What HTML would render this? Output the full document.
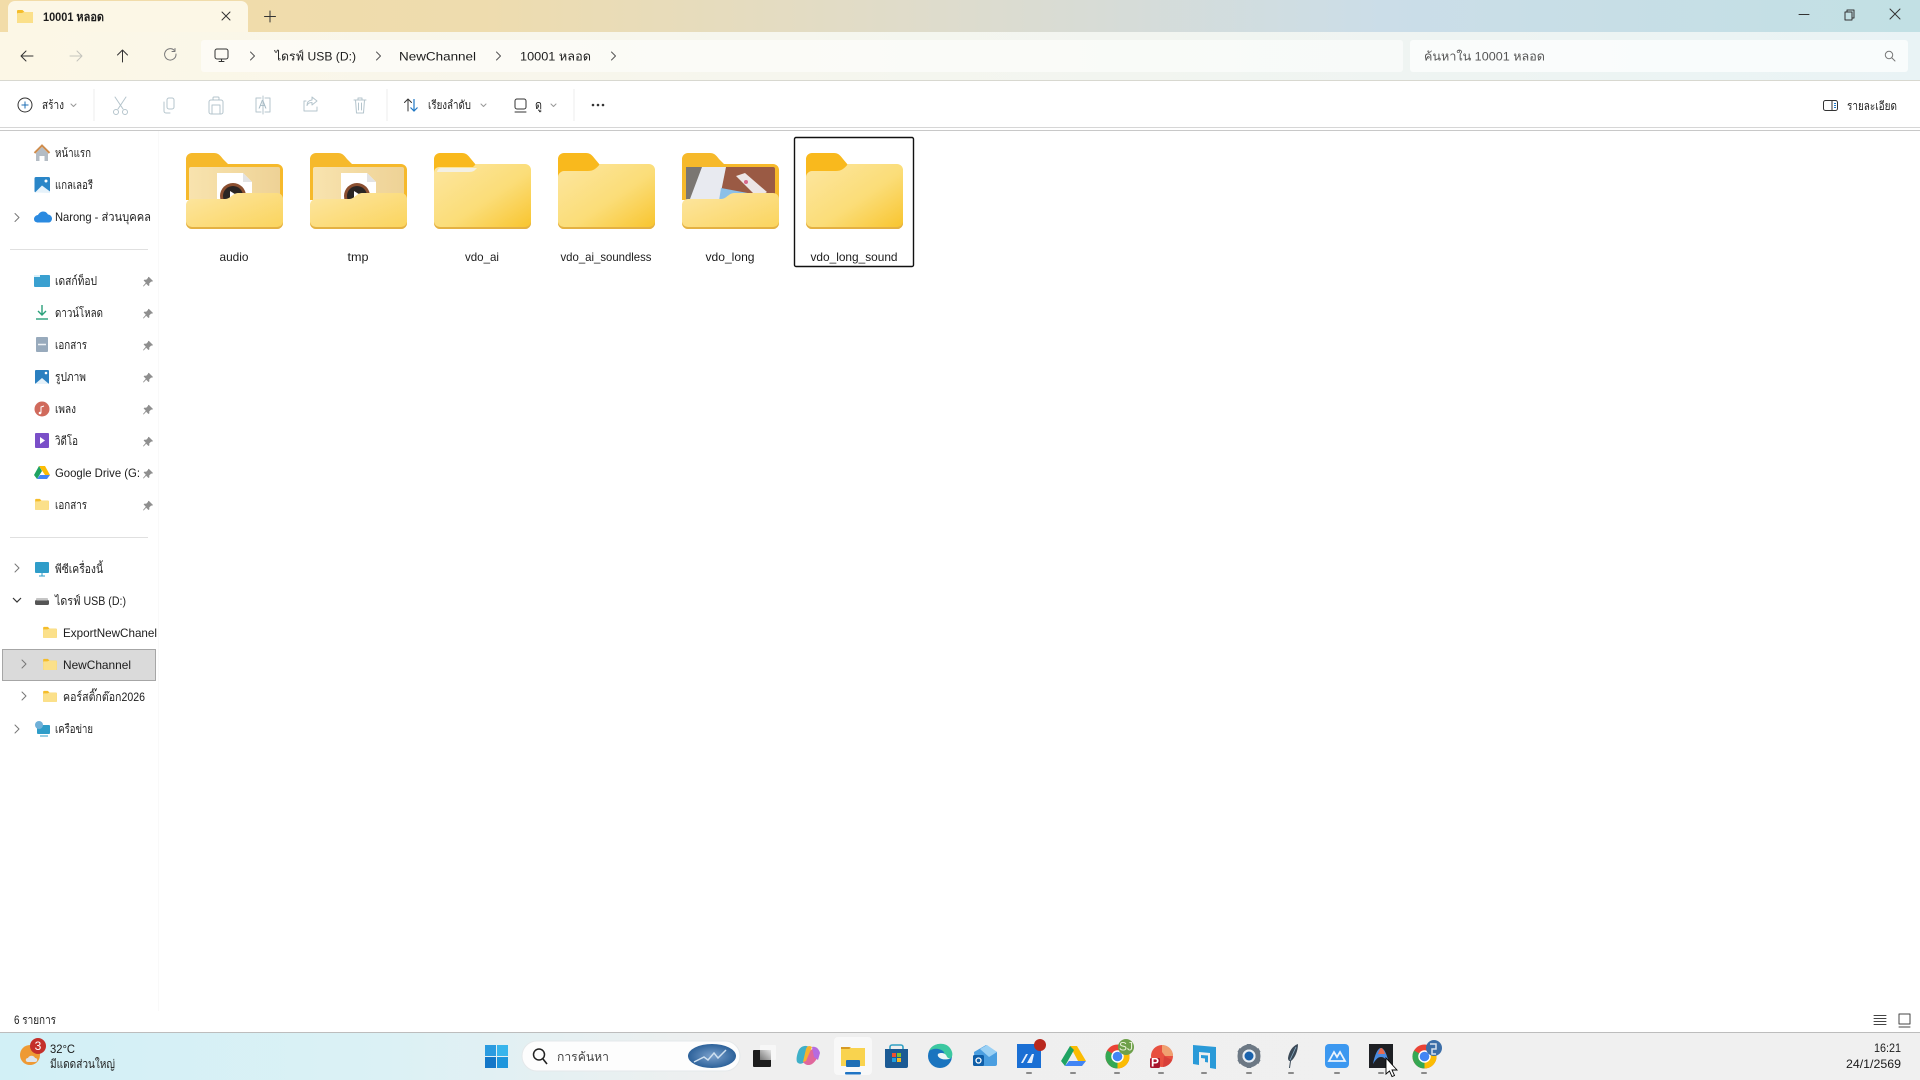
<!DOCTYPE html>
<html lang="th"><head><meta charset="utf-8"><title>10001 หลอด</title>
<style>
html,body{margin:0;padding:0;background:#fff;width:1920px;height:1080px;overflow:hidden}
svg{display:block;filter:blur(.35px)}
text{font-family:"Liberation Sans","Noto Sans CJK SC","WenQuanYi Zen Hei",sans-serif;fill:#1c1c1c;font-size:12px}
.s{fill:none;stroke:#333;stroke-width:1;stroke-linecap:round;stroke-linejoin:round}
.d{fill:none;stroke:#b4c4cc;stroke-width:1;stroke-linecap:round;stroke-linejoin:round}
.c{fill:none;stroke:#777;stroke-width:1;stroke-linecap:round;stroke-linejoin:round}
.pin{fill:#8f8f8f}
.dot{fill:#8a8a8a}
</style></head><body>
<svg width="1920" height="1080" viewBox="0 0 1920 1080" xmlns="http://www.w3.org/2000/svg">
<defs>
<linearGradient id="tb" x1="0" x2="1" y1="0" y2="0"><stop offset="0" stop-color="#f2dca8"/><stop offset=".25" stop-color="#eedcae"/><stop offset=".48" stop-color="#dfdccb"/><stop offset=".72" stop-color="#cbdde8"/><stop offset="1" stop-color="#c2e0e4"/></linearGradient>
<linearGradient id="ad" x1="0" x2="1" y1="0" y2="0"><stop offset="0" stop-color="#fcf7e6"/><stop offset=".4" stop-color="#f6f6ee"/><stop offset="1" stop-color="#e9f3f5"/></linearGradient>
<linearGradient id="tk" x1="0" x2="1" y1="0" y2="0"><stop offset="0" stop-color="#d2f0f6"/><stop offset=".2" stop-color="#dbf1f5"/><stop offset=".38" stop-color="#efefef"/><stop offset="1" stop-color="#f0f0f0"/></linearGradient>
<linearGradient id="fb" x1="0" y1="0" x2="1" y2="1"><stop offset="0" stop-color="#fce6a0"/><stop offset=".55" stop-color="#fbdd78"/><stop offset="1" stop-color="#f8c42c"/></linearGradient>
<linearGradient id="ff" x1="0" y1="0" x2="1" y2="1"><stop offset="0" stop-color="#fce6a2"/><stop offset="1" stop-color="#fbd45c"/></linearGradient>
<linearGradient id="pp" x1="0" x2="1" y1="0" y2="0"><stop offset="0" stop-color="#f8e3ae"/><stop offset="1" stop-color="#eed296"/></linearGradient>
<linearGradient id="term" x1="0" y1="1" x2="1" y2="0"><stop offset="0" stop-color="#777"/><stop offset="1" stop-color="#e6e6e6"/></linearGradient>
<radialGradient id="sdeco" cx=".5" cy=".5" r=".6"><stop offset="0" stop-color="#7aa0cc"/><stop offset="1" stop-color="#1d5590"/></radialGradient>
<symbol id="fclosed" viewBox="0 0 97 76" overflow="visible">
<path d="M0 6a6 6 0 0 1 6-6h22c4 0 6 2 9 6l5 6h49a6 6 0 0 1 6 6v52a6 6 0 0 1-6 6H6a6 6 0 0 1-6-6z" fill="#f9b91d"/>
<path d="M0 24c0-3 3-6 6-6h24c5 0 8-2 12-7h49a6 6 0 0 1 6 6v53a6 6 0 0 1-6 6H6a6 6 0 0 1-6-6z" fill="url(#fb)"/>
<path d="M0 70a6 6 0 0 0 6 6h85a6 6 0 0 0 6-6v-1a6 6 0 0 1-6 5H6a6 6 0 0 1-6-5z" fill="#e4b143"/>
</symbol>
<symbol id="fplain" viewBox="0 0 97 76" overflow="visible">
<path d="M0 6a6 6 0 0 1 6-6h22c4 0 6 2 9 6l5 6v10H0z" fill="#f9b91d"/>
<path d="M0 20q0-6 6-6h33l3-3h49a6 6 0 0 1 6 6v53a6 6 0 0 1-6 6H6a6 6 0 0 1-6-6z" fill="url(#fb)"/>
<path d="M0 70a6 6 0 0 0 6 6h85a6 6 0 0 0 6-6v-1a6 6 0 0 1-6 5H6a6 6 0 0 1-6-5z" fill="#e4b143"/>
</symbol>
<symbol id="fopen" viewBox="0 0 97 76" overflow="visible">
<path d="M0 6a6 6 0 0 1 6-6h22c4 0 6 2 9 6l5 5h49a6 6 0 0 1 6 6v30H0z" fill="#f6b92b"/>
</symbol>
<symbol id="ffront" viewBox="0 0 97 76" overflow="visible">
<path d="M0 52a6 6 0 0 1 6-6h33c4 0 6-3 8-4 1-1 3-2 6-2h38a6 6 0 0 1 6 6v24a6 6 0 0 1-6 6H6a6 6 0 0 1-6-6z" fill="url(#ff)"/>
<path d="M0 70a6 6 0 0 0 6 6h85a6 6 0 0 0 6-6v-1a6 6 0 0 1-6 5H6a6 6 0 0 1-6-5z" fill="#e4b143"/>
</symbol>
<symbol id="fsm" viewBox="0 0 16 14" overflow="visible">
<path d="M0 2a1 1 0 0 1 1-1h4.500l2 2H15a1 1 0 0 1 1 1v9a1 1 0 0 1-1 1H1a1 1 0 0 1-1-1z" fill="#f5bd2a"/>
<path d="M0 5q0-1 1-1h4l2-1h8a1 1 0 0 1 1 1v9a1 1 0 0 1-1 1H1a1 1 0 0 1-1-1z" fill="#fbe08a"/>
</symbol>
<symbol id="pinI" viewBox="0 0 10 10" overflow="visible"><path class="pin" d="M6 0l4 4-1 .8-.8-.3-2 2 .2 1.700-.9.800-2.300-2.300L.6 9.500 0 9l2.800-3.300L.6 3.400l.9-.8 1.700.2 2-2-.3-.9z"/></symbol>
<symbol id="chrome" viewBox="0 0 26 26" overflow="visible">
<circle cx="13" cy="13" r="12.500" fill="#ea4335"/>
<path d="M13 13L2.200 19.200A12.500 12.500 0 0 0 13 25.500z" fill="#34a853"/><path d="M13 13L2.200 19.200A12.500 12.500 0 0 1 2.200 6.800L13 13z" fill="#34a853"/>
<path d="M13 13V25.500A12.500 12.500 0 0 0 25.500 13H13z" fill="#fbbc04"/>
<path d="M13 13h12.500A12.500 12.500 0 0 0 23.800 6.800H13z" fill="#fbbc04"/>
<circle cx="13" cy="13" r="6.500" fill="#fff"/><circle cx="13" cy="13" r="5" fill="#4285f4"/>
</symbol>
</defs>

<rect width="1920" height="1080" fill="#fff"/>
<rect width="1920" height="32" fill="url(#tb)"/>
<rect y="32" width="1920" height="48" fill="url(#ad)"/>
<path d="M8 32V8a7 7 0 0 1 7-7h226a7 7 0 0 1 7 7v24z" fill="#fcf7e6"/>
<use href="#fsm" x="17" y="9" width="16" height="14"/>
<text x="43" y="21" font-size="12" font-weight="bold" textLength="61" lengthAdjust="spacingAndGlyphs">10001 หลอด</text>
<path class="s" d="M222 12l8 8M230 12l-8 8"/>
<path class="s" d="M270 11v11M264.500 16.500h11"/>
<path class="s" d="M1799 14.500h10"/>
<path class="s" d="M1845 12h7v8h-7zM1847 12v-2h7v8h-2"/>
<path class="s" d="M1890 9l10 10M1900 9l-10 10"/>
<rect x="201" y="40" width="1202" height="32" rx="3" fill="#ffffff" fill-opacity=".55"/>
<rect x="1410" y="40" width="498" height="32" rx="3" fill="#ffffff" fill-opacity=".7"/>
<path class="s" d="M33 56H21M26 51l-5 5 5 5"/>
<path class="d" style="stroke:#c4c4bc" d="M70 56h12M77 51l5 5-5 5"/>
<path class="s" d="M122.500 62V50M117.500 55l5-5 5 5"/>
<path class="c" d="M176 54a5.700 5.700 0 1 1-1.800-3.800M175 48.500v3h-3"/>
<rect x="215" y="49" width="13" height="10" rx="2" class="s"/><path class="s" d="M219 61.500h5M221.500 59v2"/>
<path class="c" style="stroke:#555" d="M250.500 52l4 4-4 4M376.500 52l4 4-4 4M496.500 52l4 4-4 4M611.500 52l4 4-4 4"/>
<text x="275" y="60.500" font-size="13" textLength="81" lengthAdjust="spacingAndGlyphs">ไดรฟ์ USB (D:)</text>
<text x="399" y="60.500" font-size="13" textLength="77" lengthAdjust="spacingAndGlyphs">NewChannel</text>
<text x="520" y="60.500" font-size="13" textLength="71" lengthAdjust="spacingAndGlyphs">10001 หลอด</text>
<text x="1424" y="60.500" font-size="13" style="fill:#555" textLength="121" lengthAdjust="spacingAndGlyphs">ค้นหาใน 10001 หลอด</text>
<circle cx="1889" cy="55" r="3.700" class="c"/><path class="c" d="M1892 58l3 3"/>
<rect y="80" width="1920" height="1" fill="#d8d8d0"/>
<circle cx="25" cy="105" r="7" class="s"/><path d="M25 101.500v7M21.500 105h7" stroke="#1f6fb5" fill="none"/>
<text x="42" y="109" font-size="11" textLength="22" lengthAdjust="spacingAndGlyphs">สร้าง</text>
<path class="c" style="stroke:#999" d="M71 104l2.500 2.500 2.500-2.500M481 104l2.500 2.500 2.500-2.500M551 104l2.500 2.500 2.500-2.500"/>
<path d="M94 89v32M387 89v32M574 89v32" stroke="#ececec"/>
<g class="d"><path d="M115 97l8 12M126 97l-8 12"/><circle cx="116" cy="112" r="2.500"/><circle cx="125" cy="112" r="2.500"/></g>
<g class="d"><rect x="167" y="98" width="7" height="11" rx="2"/><path d="M164 102v9a2 2 0 0 0 2 2h4"/></g>
<g class="d"><rect x="209" y="100" width="14" height="14" rx="2"/><rect x="213" y="97" width="6" height="3" rx="1"/><rect x="212" y="105" width="8" height="9"/></g>
<g class="d"><path d="M261 98h-5v14h5M265 98h5v14h-5M263 96v18"/><text x="258.500" y="108.500" font-size="9" style="fill:#a9bcc6;stroke:none">A</text></g>
<g class="d"><path d="M306 101h-2v10h13v-4M312 97l5 4-5 4v-2.500c-3 0-4 1-5 3 0-3 1-5 5-5.500z"/></g>
<g class="d"><path d="M354 100h12M358 100v-2h4v2M355.500 100l1 13h7l1-13M358.500 103v7M361.500 103v7"/></g>
<path d="M408 111V99M404.500 102.500l3.500-3.500 3.500 3.500" class="s"/><path d="M414 99v12M410.500 107.500l3.500 3.500 3.500-3.500" fill="none" stroke="#1f77c4" stroke-width="1.200"/>
<text x="428" y="109" font-size="11" textLength="43" lengthAdjust="spacingAndGlyphs">เรียงลำดับ</text>
<rect x="515" y="99" width="11" height="10" rx="2" class="s"/><path class="s" d="M515 112h11"/>
<text x="535" y="109" font-size="11" textLength="7" lengthAdjust="spacingAndGlyphs">ดู</text>
<circle cx="593" cy="105" r="1.300" fill="#333"/><circle cx="598" cy="105" r="1.300" fill="#333"/><circle cx="603" cy="105" r="1.300" fill="#333"/>
<rect x="1823.500" y="100.500" width="14" height="10" rx="2" class="s"/><path d="M1832 101v9" class="s"/><path d="M1834 103.500h2M1834 105.500h2M1834 107.500h2" stroke="#1f77c4"/>
<text x="1847" y="110" font-size="11" textLength="50" lengthAdjust="spacingAndGlyphs">รายละเอียด</text>
<rect y="127" width="1920" height="1" fill="#d6d6d6"/>
<rect y="130" width="1920" height="1" fill="#c8c8c8"/>
<rect x="158" y="131" width="1" height="880" fill="#f9f9f9"/>
<path d="M36 153l6-6 6 6v8h-3.500v-5h-5v5H36z" fill="#b4bcc4"/><path d="M34.500 153l7.500-7.500 7.500 7.500" fill="none" stroke="#cf8d4e" stroke-width="2"/>
<text x="55" y="157" font-size="11" textLength="36" lengthAdjust="spacingAndGlyphs">หน้าแรก</text>
<rect x="34.500" y="177" width="15.500" height="15.500" rx="1.500" fill="#2a86c8"/><path d="M35 192.500l7-7 8 6v1.500z" fill="#e6f2fa"/><circle cx="46" cy="181" r="1.500" fill="#fff"/>
<text x="55" y="189" font-size="11" textLength="38" lengthAdjust="spacingAndGlyphs">แกลเลอรี</text>
<path class="c" d="M15 213.500l4 4-4 4"/>
<path d="M34 219c0-2 2-4 4-4 1-2 3-3.500 5-3.500 3 0 4 1.500 5 3 2 0 4 2 4 4s-1.500 4-3 4H38c-2 0-4-1-4-3.500z" fill="#2a8ae0"/>
<text x="55" y="221" font-size="12" textLength="96" lengthAdjust="spacingAndGlyphs">Narong - ส่วนบุคคล</text>
<rect x="10" y="249" width="138" height="1" fill="#e0e0e0"/>
<rect x="34" y="275" width="16" height="12" rx="1" fill="#3aa0d0"/><rect x="34" y="275" width="6" height="2" fill="#d8f0fa"/>
<text x="55" y="285" font-size="11" textLength="42" lengthAdjust="spacingAndGlyphs">เดสก์ท็อป</text>
<use href="#pinI" x="143" y="277" width="10" height="10"/>
<path d="M42 305v10M38 311l4 4 4-4" fill="none" stroke="#2aa07a" stroke-width="1.400"/><path d="M36 319h12" stroke="#2aa07a" stroke-width="1.400"/>
<text x="55" y="317" font-size="11" textLength="48" lengthAdjust="spacingAndGlyphs">ดาวน์โหลด</text>
<use href="#pinI" x="143" y="309" width="10" height="10"/>
<rect x="36" y="337" width="12" height="15" rx="1" fill="#98aabc"/><path d="M38 344.500h8" stroke="#eef2f6" stroke-width="1.500"/>
<text x="55" y="349" font-size="11" textLength="32" lengthAdjust="spacingAndGlyphs">เอกสาร</text>
<use href="#pinI" x="143" y="341" width="10" height="10"/>
<rect x="35" y="370" width="14" height="14" rx="1" fill="#2a7fc0"/><path d="M35 384l7-6 7 6z" fill="#e6f2fa"/><circle cx="46" cy="373" r="1.300" fill="#fff"/>
<text x="55" y="381" font-size="11" textLength="31" lengthAdjust="spacingAndGlyphs">รูปภาพ</text>
<use href="#pinI" x="143" y="373" width="10" height="10"/>
<circle cx="42" cy="409" r="7.500" fill="#d06a5c"/><path d="M41 413v-6l3-1" stroke="#fff" fill="none"/><circle cx="40" cy="413" r="1.300" fill="#fff"/>
<text x="55" y="413" font-size="11" textLength="21" lengthAdjust="spacingAndGlyphs">เพลง</text>
<use href="#pinI" x="143" y="405" width="10" height="10"/>
<rect x="35" y="433" width="14" height="15" rx="1" fill="#7a4fc8"/><path d="M40 437l5 3.500-5 3.500z" fill="#fff"/>
<text x="55" y="445" font-size="11" textLength="23" lengthAdjust="spacingAndGlyphs">วิดีโอ</text>
<use href="#pinI" x="143" y="437" width="10" height="10"/>
<path d="M39 466h6l5 9h-5z" fill="#fbbc04"/><path d="M39 466l-5 9 3 4 5-8z" fill="#1ea362"/><path d="M37 479h10l3-4H40z" fill="#4285f4"/>
<text x="55" y="477" font-size="12" textLength="85" lengthAdjust="spacingAndGlyphs">Google Drive (G:</text>
<use href="#pinI" x="143" y="469" width="10" height="10"/>
<use href="#fsm" x="35" y="498" width="14" height="12"/>
<text x="55" y="509" font-size="11" textLength="32" lengthAdjust="spacingAndGlyphs">เอกสาร</text>
<use href="#pinI" x="143" y="501" width="10" height="10"/>
<rect x="10" y="537" width="138" height="1" fill="#e0e0e0"/>
<path class="c" d="M15 564l4 4-4 4"/>
<rect x="35" y="562" width="14" height="11" rx="1" fill="#2f9dc9"/><path d="M39 576h6M42 573v3" stroke="#2f9dc9"/>
<text x="55" y="573" font-size="11" textLength="48" lengthAdjust="spacingAndGlyphs">พีซีเครื่องนี้</text>
<path d="M13 598l4 4 4-4" fill="none" stroke="#333" stroke-width="1.200"/>
<rect x="35" y="600" width="14" height="5" rx="1.500" fill="#555"/><rect x="36" y="598" width="12" height="2.500" rx="1" fill="#c5c5c5"/>
<text x="55" y="605" font-size="12" textLength="71" lengthAdjust="spacingAndGlyphs">ไดรฟ์ USB (D:)</text>
<use href="#fsm" x="43" y="626" width="14" height="12"/>
<text x="63" y="637" font-size="12" textLength="94" lengthAdjust="spacingAndGlyphs">ExportNewChanel</text>
<rect x="2.500" y="649.500" width="153" height="31" fill="#dadada" stroke="#a6a6a6"/>
<path class="c" d="M22 660l4 4-4 4"/>
<use href="#fsm" x="43" y="658" width="14" height="12"/>
<text x="63" y="669" font-size="12" textLength="68" lengthAdjust="spacingAndGlyphs">NewChannel</text>
<path class="c" d="M22 692l4 4-4 4"/>
<use href="#fsm" x="43" y="690" width="14" height="12"/>
<text x="63" y="701" font-size="12" textLength="82" lengthAdjust="spacingAndGlyphs">คอร์สติ๊กต๊อก2026</text>
<path class="c" d="M15 725l4 4-4 4"/>
<rect x="37" y="725" width="13" height="9" rx="1" fill="#2f9dc9"/><circle cx="39" cy="725" r="4" fill="#6fb0d8"/><path d="M40 736h8" stroke="#2f9dc9"/>
<text x="55" y="733" font-size="11" textLength="38" lengthAdjust="spacingAndGlyphs">เครือข่าย</text>
<use href="#fopen" x="186" y="153" width="97" height="76"/>
<rect x="189" y="167" width="91" height="40" rx="2" fill="url(#pp)"/>
<path d="M217 173h26l9 9v26h-35z" fill="#fff"/><path d="M243 173l9 9h-9z" fill="#e3e3e3"/>
<circle cx="233" cy="196" r="13" fill="#8b4f30"/><circle cx="233" cy="196" r="10" fill="#2a2523"/><path d="M230 191l8 5-8 5z" fill="#fff"/>
<use href="#ffront" x="186" y="153" width="97" height="76"/>
<use href="#fopen" x="310" y="153" width="97" height="76"/>
<rect x="313" y="167" width="91" height="40" rx="2" fill="url(#pp)"/>
<path d="M341 173h26l9 9v26h-35z" fill="#fff"/><path d="M367 173l9 9h-9z" fill="#e3e3e3"/>
<circle cx="357" cy="196" r="13" fill="#8b4f30"/><circle cx="357" cy="196" r="10" fill="#2a2523"/><path d="M354 191l8 5-8 5z" fill="#fff"/>
<use href="#ffront" x="310" y="153" width="97" height="76"/>
<use href="#fplain" x="434" y="153" width="97" height="76"/>
<path d="M437 172q1-4 4-4h36l-3 3q-2 1-5 1z" fill="#f3f0e4"/>
<use href="#fclosed" x="558" y="153" width="97" height="76"/>
<use href="#fopen" x="682" y="153" width="97" height="76"/>
<rect x="686" y="167" width="89" height="40" rx="2" fill="#9a5a44"/>
<path d="M686 167h18l-6 40h-12z" fill="#7a7672"/>
<path d="M702 167h24l-8 40h-31z" fill="#e8eaf0"/>
<path d="M721 188l32 6-3 13h-32z" fill="#8cc0e8"/>
<path d="M736 176l9-3 22 19-9 6z" fill="#ece6e6"/><circle cx="746" cy="182" r="2" fill="#d8688c"/>
<use href="#ffront" x="682" y="153" width="97" height="76"/>
<rect x="794.500" y="137.500" width="119" height="129" rx="1.500" fill="none" stroke="#111" stroke-width="1.400"/>
<use href="#fclosed" x="806" y="153" width="97" height="76"/>
<text x="234" y="261" text-anchor="middle" font-size="11.500" textLength="29" lengthAdjust="spacingAndGlyphs">audio</text>
<text x="358" y="261" text-anchor="middle" font-size="11.500" textLength="21" lengthAdjust="spacingAndGlyphs">tmp</text>
<text x="482" y="261" text-anchor="middle" font-size="11.500" textLength="34" lengthAdjust="spacingAndGlyphs">vdo_ai</text>
<text x="606" y="261" text-anchor="middle" font-size="11.500" textLength="91" lengthAdjust="spacingAndGlyphs">vdo_ai_soundless</text>
<text x="730" y="261" text-anchor="middle" font-size="11.500" textLength="49" lengthAdjust="spacingAndGlyphs">vdo_long</text>
<text x="854" y="261" text-anchor="middle" font-size="11.500" textLength="87" lengthAdjust="spacingAndGlyphs">vdo_long_sound</text>
<text x="14" y="1024" font-size="11" textLength="42" lengthAdjust="spacingAndGlyphs">6 รายการ</text>
<path class="c" style="stroke:#444" d="M1874 1015.500h12M1874 1018.500h12M1874 1021.500h12M1874 1024.500h12"/>
<rect x="1899" y="1014" width="11" height="10" class="c" style="stroke:#444"/><path class="c" style="stroke:#444" d="M1899 1027h11"/>
<rect y="1032" width="1920" height="48" fill="url(#tk)"/>
<rect y="1032" width="1920" height="1" fill="#bdbdbd"/>
<circle cx="30" cy="1055" r="10" fill="#ee9a34"/><path d="M28 1062c-3 0-3-4 0-4 1-3 6-3 7 0 3 0 3 4 0 4z" fill="#dde4ec"/>
<circle cx="38" cy="1046" r="8" fill="#c4302b"/><text x="38" y="1050" text-anchor="middle" font-size="10.500" style="fill:#fff">3</text>
<text x="50" y="1053" font-size="11.500" textLength="25" lengthAdjust="spacingAndGlyphs">32°C</text>
<text x="50" y="1068" font-size="10.500" textLength="65" lengthAdjust="spacingAndGlyphs">มีแดดส่วนใหญ่</text>
<rect x="485" y="1045" width="11" height="11" fill="#2a9be0"/><rect x="497" y="1045" width="11" height="11" fill="#38b5ec"/><rect x="485" y="1057" width="11" height="11" fill="#1377c8"/><rect x="497" y="1057" width="11" height="11" fill="#1e96dc"/>
<rect x="522" y="1041" width="218" height="30" rx="15" fill="#fdfdfd" stroke="#e4e8ea"/>
<circle cx="539" cy="1054.500" r="5.500" fill="none" stroke="#222" stroke-width="1.500"/><path d="M543 1059l4 5" stroke="#222" stroke-width="1.600"/>
<text x="557" y="1061" font-size="12" style="fill:#444" textLength="52" lengthAdjust="spacingAndGlyphs">การค้นหา</text>
<ellipse cx="712" cy="1056" rx="24" ry="12" fill="url(#sdeco)"/><path d="M694 1062l10-5 4 3 6-7 4 5 8-8" stroke="#cfe0f0" fill="none" stroke-width="1.500"/>
<rect x="760" y="1045" width="16" height="15" rx="1" fill="#f7f7f7"/>
<rect x="753" y="1050" width="18" height="17" rx="1" fill="#1c1c1c"/><rect x="760" y="1050" width="11" height="10" fill="url(#term)"/>
<path d="M798 1052c2-7 9-7 11-5l-3 12c-1 5-7 6-9 3-1-3 0-7 1-10z" fill="#3fb0c8"/>
<path d="M803 1062c2 3 6 4 9 2 3-2 5-5 7-10l-1-3c-2-3-6-3-8 0z" fill="#e0679c"/>
<path d="M803 1062l3-1 6-14c-3-2-5-1-6 2z" fill="#f5b32e"/><path d="M812 1047c4-1 7 2 8 6l-2 7-4-3z" fill="#b56be0"/>
<rect x="834" y="1037" width="38" height="38" rx="4" fill="#f8f8f8"/>
<path d="M841 1047h9l2 2h13v16h-24z" fill="#e8a82a"/><rect x="841" y="1048" width="24" height="18" fill="#f9d34e"/><path d="M841 1047h8l1 2h-9z" fill="#d79a24"/><rect x="846" y="1060" width="14" height="7" rx="1" fill="#1f6fb5"/>
<rect x="845" y="1072" width="16" height="2.500" rx="1" fill="#1f74c4"/>
<path d="M885 1049h23v17a2 2 0 0 1-2 2h-19a2 2 0 0 1-2-2z" fill="#1b5a94"/><path d="M890 1049v-2a2 2 0 0 1 2-2h9a2 2 0 0 1 2 2v2" fill="none" stroke="#31a0c4" stroke-width="1.600"/>
<rect x="892" y="1053" width="4" height="4" fill="#f05030"/><rect x="897" y="1053" width="4" height="4" fill="#80c030"/><rect x="892" y="1058" width="4" height="4" fill="#20a0e0"/><rect x="897" y="1058" width="4" height="4" fill="#f8b820"/>
<circle cx="940" cy="1056" r="12" fill="#1a74bf"/><path d="M929 1051c3-8 16-10 21-3 3 4 3 8 1 10-3 2-8 2-9-1 3-1 3-4 1-6-4-3-10-3-14 0z" fill="#3cc8a0"/><path d="M938 1054c3-2 8-1 9 3 2 2 4 2 5 1-2 1-7 2-10 1-3-1-5-3-4-5z" fill="#eef6f6"/>
<path d="M974 1052l12-7 11 7v12a2 2 0 0 1-2 2h-20z" fill="#4a9ee0"/><path d="M980 1049l7-4 10 7-8 5z" fill="#9ad0f4"/>
<rect x="973" y="1055" width="11" height="11" rx="1.500" fill="#0f5ea8"/><circle cx="978.500" cy="1060.500" r="2.500" fill="none" stroke="#fff" stroke-width="1.300"/>
<rect x="1017" y="1044" width="24" height="24" fill="#1a6fd4"/><path d="M1021 1063l5-9h2l-5 9zM1027 1063l5-9h2l-2 9z" fill="#e6f0fc"/>
<circle cx="1040" cy="1045" r="6" fill="#b8281e"/>
<rect x="1026" y="1072" width="6" height="2" rx="1" class="dot"/>
<path d="M1070 1046h7l9 15h-8z" fill="#fbbc04"/><path d="M1070 1046l-9 15 4 5 9-16z" fill="#1ea362"/><path d="M1065 1066h17l4-5h-17z" fill="#4285f4"/>
<rect x="1070" y="1072" width="6" height="2" rx="1" class="dot"/>
<use href="#chrome" x="1105" y="1044" width="25" height="25"/>
<circle cx="1126" cy="1047" r="8" fill="#6ea04a"/><text x="1126" y="1050.500" text-anchor="middle" font-size="9" style="fill:#e8f0d8">SJ</text>
<rect x="1114" y="1072" width="6" height="2" rx="1" class="dot"/>
<circle cx="1162" cy="1056" r="11" fill="#e85040"/><path d="M1162 1045a11 11 0 0 1 11 11l-8 0-3-4z" fill="#f0a070"/><path d="M1164 1056l8 4a11 11 0 0 1-9 7z" fill="#d8403a"/>
<rect x="1150" y="1058" width="10" height="10" rx="1.500" fill="#a8142c"/><text x="1155" y="1066.500" text-anchor="middle" font-size="8" font-weight="bold" style="fill:#fff">P</text>
<rect x="1158" y="1072" width="6" height="2" rx="1" class="dot"/>
<path d="M1193 1045l23 2v22l-6-1v-15l-11-1v13l-6-1z" fill="#2a9ad8"/><path d="M1201 1055l7 .5v7l-3-.5v-3.500l-4-.5z" fill="#2a9ad8"/>
<rect x="1201" y="1072" width="6" height="2" rx="1" class="dot"/>
<circle cx="1249" cy="1056" r="9" fill="none" stroke="#6c7884" stroke-width="5"/>
<path d="M1249 1044v4M1249 1064v4M1238.500 1050l3.500 2M1256 1060l3.500 2M1238.500 1062l3.500-2M1256 1052l3.500-2" stroke="#6c7884" stroke-width="4.500"/>
<circle cx="1249" cy="1056" r="6.500" fill="#e8eef4"/><circle cx="1249" cy="1056" r="4.500" fill="#1a62ac"/>
<rect x="1246" y="1072" width="6" height="2" rx="1" class="dot"/>
<path d="M1298 1044c-6 2-9 8-10 14 0 2 1 3 2 3l-1 7 1 0 1-7c4-3 7-10 7-17z" fill="#3c4a58"/><path d="M1296 1047l-6 13" stroke="#8ab0c8" stroke-width=".8"/>
<rect x="1288" y="1072" width="6" height="2" rx="1" class="dot"/>
<rect x="1325" y="1044" width="24" height="24" rx="4" fill="#3c98f0"/><path d="M1329 1061l5-9 3 5 3-5 5 9z" fill="none" stroke="#eaf4fe" stroke-width="1.800"/>
<rect x="1334" y="1072" width="6" height="2" rx="1" class="dot"/>
<rect x="1369" y="1044" width="24" height="24" fill="#1e2024"/><path d="M1373 1064c2-10 5-16 8-16s6 6 8 16c-3-5-5-7-8-7s-5 2-8 7z" fill="#4a8ce0"/><path d="M1378 1054c1-3 2-6 3-6 2 0 3 3 4 6z" fill="#e66a50"/>
<rect x="1378" y="1072" width="6" height="2" rx="1" class="dot"/>
<use href="#chrome" x="1412" y="1044" width="25" height="25"/>
<circle cx="1434" cy="1048" r="8" fill="#3c6ea8"/><path d="M1430 1044h6v5h-4v5h4" stroke="#d8e0ec" fill="none" stroke-width="1.500"/>
<rect x="1421" y="1072" width="6" height="2" rx="1" class="dot"/>
<path d="M1386 1058v16l3.500-3 2.500 5.500 2.500-1-2.500-5.500 5 0z" fill="#fff" stroke="#000" stroke-width=".9"/>
<text x="1901" y="1052" text-anchor="end" font-size="12" textLength="27" lengthAdjust="spacingAndGlyphs">16:21</text>
<text x="1901" y="1068" text-anchor="end" font-size="12" textLength="55" lengthAdjust="spacingAndGlyphs">24/1/2569</text>
</svg>
</body></html>
